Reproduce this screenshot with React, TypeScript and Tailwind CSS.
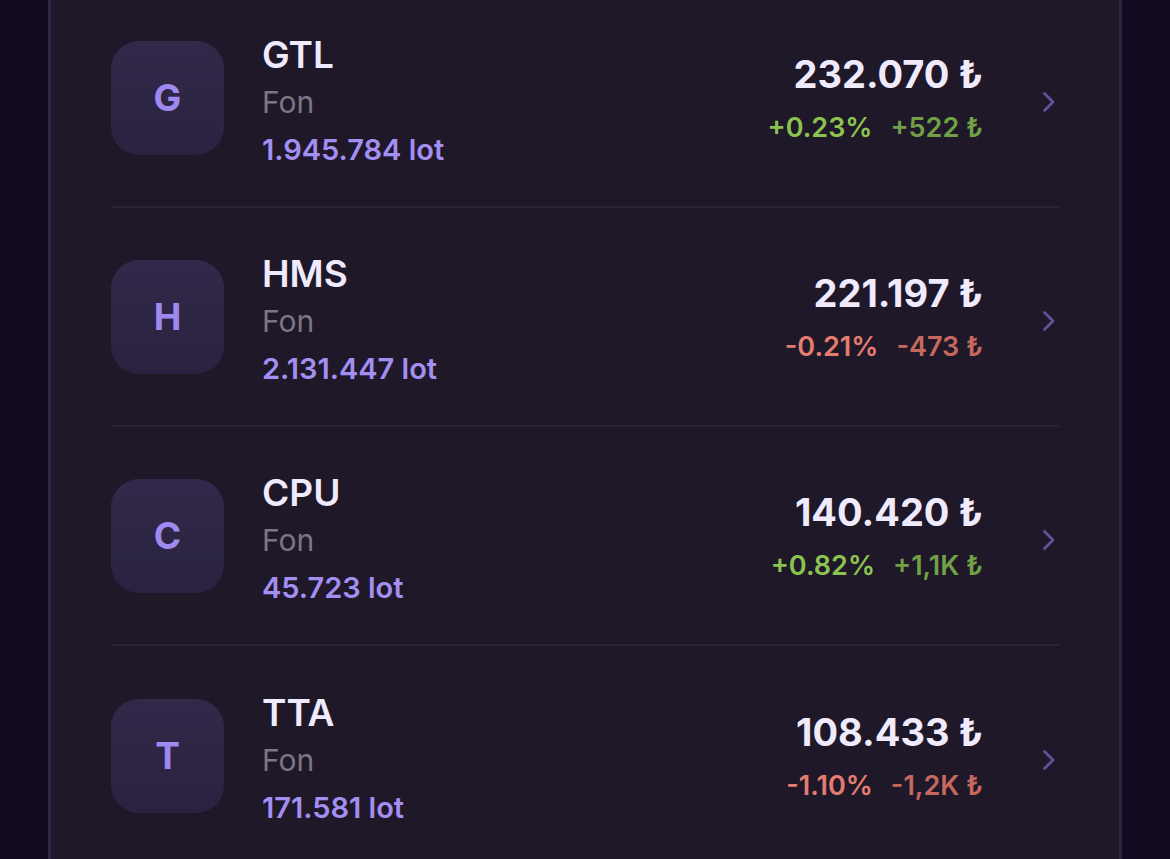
type Holding = {
  code: string
  lots: string
  price: string
  pct: string
  amount: string
  up: boolean
}

const holdings: Holding[] = [
  { code: 'GTL', lots: '1.945.784 lot', price: '232.070', pct: '+0.23%', amount: '+522', up: true },
  { code: 'HMS', lots: '2.131.447 lot', price: '221.197', pct: '-0.21%', amount: '-473', up: false },
  { code: 'CPU', lots: '45.723 lot', price: '140.420', pct: '+0.82%', amount: '+1,1K', up: true },
  { code: 'TTA', lots: '171.581 lot', price: '108.433', pct: '-1.10%', amount: '-1,2K', up: false },
]

function HoldingRow({ item, last }: { item: Holding; last: boolean }) {
  return (
    <div
      className={
        'mx-[60px] flex h-[219px] items-center ' +
        (last ? '' : 'border-b-2 border-[#2a2536]')
      }
    >
      <div className="flex h-[114px] w-[113px] shrink-0 items-center justify-center rounded-[28px] bg-gradient-to-b from-[#32294a] to-[#2a2240]">
        <span className="text-[37px] font-bold text-[#9f88ef]">{item.code[0]}</span>
      </div>

      <div className="ml-[38px] flex flex-col pt-[10px]">
        <span className="text-[37px] leading-[46px] font-semibold text-[#efeafc]">{item.code}</span>
        <span className="text-[30px] leading-[48px] text-[#7b7686]">Fon</span>
        <span className="text-[29px] leading-[47px] font-semibold text-[#a48ef1]">{item.lots}</span>
      </div>

      <div className="ml-auto flex flex-col items-end pt-[9px]">
        <span className="text-[38px] leading-[52px] font-bold text-[#efeafc]">{item.price} ₺</span>
        <div className="flex gap-[18px] text-[27px] leading-[56px] font-semibold">
          <span className={item.up ? 'text-[#8cc34f]' : 'text-[#e47c70]'}>{item.pct}</span>
          <span className={item.up ? 'text-[#71a046]' : 'text-[#c6685d]'}>{item.amount} ₺</span>
        </div>
      </div>

      <svg
        width="14"
        height="22"
        viewBox="0 0 14 22"
        fill="none"
        className="ml-[59px] mr-[3px] mt-[8px] shrink-0"
      >
        <path d="M2.5 2.5 L11 11 L2.5 19.5" stroke="#5f5399" strokeWidth="2.8" strokeLinecap="round" strokeLinejoin="round" />
      </svg>
    </div>
  )
}

export default function App() {
  return (
    <div
      className="flex h-[859px] w-full overflow-hidden bg-[#130b21] px-[48px]"
      style={{ fontFamily: 'Inter, "DejaVu Sans", sans-serif' }}
    >
      <div className="-mt-[11px] w-full self-start border-x-[3px] border-[#2c2740] bg-[#1e1829]">
        {holdings.map((h, i) => (
          <HoldingRow key={h.code} item={h} last={i === holdings.length - 1} />
        ))}
      </div>
    </div>
  )
}
